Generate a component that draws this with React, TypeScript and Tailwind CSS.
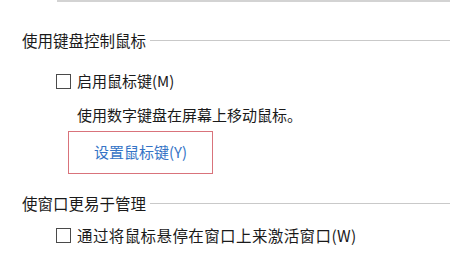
import React from 'react';

const font = { fontFamily: '"Microsoft YaHei", "Noto Sans CJK SC", sans-serif' };

function SectionTitle({ label }: { label: string }) {
  return (
    <div className="flex items-center pl-[22px] h-5">
      <span className="text-[15.5px] leading-5 text-[#1a1a1a] whitespace-nowrap">{label}</span>
      <div className="ml-[4px] flex-1 h-px bg-[#c9c9c9]" />
    </div>
  );
}

function CheckRow({ label, wide }: { label: string; wide?: boolean }) {
  return (
    <div className="flex items-center pl-[56px] h-5">
      <span className="w-[15px] h-[15px] border border-[#4a4a4a] bg-white shrink-0" />
      <span
        className={
          wide
            ? 'ml-[6px] text-[15.5px] tracking-[0.4px] leading-5 text-[#1a1a1a] whitespace-nowrap'
            : 'ml-[6px] text-[15px] leading-5 text-[#1a1a1a] whitespace-nowrap'
        }
      >
        {label}
      </span>
    </div>
  );
}

export default function App() {
  return (
    <div className="w-[450px] h-[256px] bg-white overflow-hidden" style={font}>
      {/* top divider from the previous section */}
      <div className="ml-[57px] h-[2px] bg-[#d3d3d3]" />

      <div className="mt-[28px]">
        <SectionTitle label="使用键盘控制鼠标" />
      </div>

      <div className="mt-[21px]">
        <CheckRow label="启用鼠标键(M)" />
      </div>

      <p className="mt-[14px] pl-[77px] text-[15px] leading-5 text-[#1a1a1a] whitespace-nowrap">
        使用数字键盘在屏幕上移动鼠标。
      </p>

      <div className="mt-[6px] pl-[68px]">
        <button className="w-[145px] h-[43px] border border-[#d9737b] bg-white text-[15px] text-[#3574c6] flex items-center justify-center">
          设置鼠标键(Y)
        </button>
      </div>

      <div className="mt-[19px]">
        <SectionTitle label="使窗口更易于管理" />
      </div>

      <div className="mt-[12px]">
        <CheckRow label="通过将鼠标悬停在窗口上来激活窗口(W)" wide />
      </div>
    </div>
  );
}
